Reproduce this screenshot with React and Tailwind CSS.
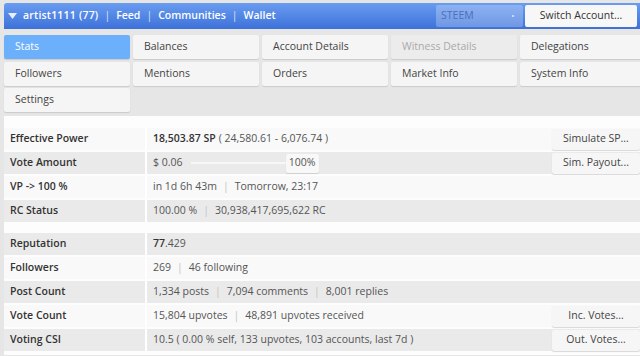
const tabs = [
  { label: 'Stats', active: true },
  { label: 'Balances' },
  { label: 'Account Details' },
  { label: 'Witness Details', disabled: true },
  { label: 'Delegations' },
  { label: 'Followers' },
  { label: 'Mentions' },
  { label: 'Orders' },
  { label: 'Market Info' },
  { label: 'System Info' },
  { label: 'Settings' },
]

const Sep = ({ head }) => <span className={head ? 'mx-[6px] text-[#d8e3f8]' : 'mx-[6px] text-[#c4c4c4]'}>|</span>

const SideButton = ({ children }) => (
  <button className="ml-auto h-[21px] w-[88px] shrink-0 rounded-[2px] bg-[#f6f6f6] text-[#444] shadow-[0_1px_1px_rgba(0,0,0,0.15)]">
    {children}
  </button>
)

const Row = ({ label, gray, children, action }) => (
  <div className={`flex h-[22px] items-center ${gray ? 'bg-[#eaeaea]' : 'bg-[#f9f9f9]'}`}>
    <div className="flex h-full w-[143px] shrink-0 items-center border-r-2 border-white pl-[6px] font-semibold text-[#333]">
      {label}
    </div>
    <div className="flex h-full flex-1 items-center whitespace-nowrap pl-[6px] text-[#555]">
      {children}
      {action && <SideButton>{action}</SideButton>}
    </div>
  </div>
)

const App = () => {
  return (
    <div className="h-[356px] w-[640px] overflow-hidden bg-[#e6e6e6] pt-[3px] pl-[4px] text-[10.5px]" style={{ fontFamily: '"Open Sans", sans-serif' }}>
      <div className="flex h-[26px] items-center whitespace-nowrap rounded-tl-[3px] bg-gradient-to-b from-[#6a9cf0] to-[#3d71d9] pl-[4px] pr-[3px] text-[10.5px] text-white">
        <svg width="9" height="6" viewBox="0 0 9 6" className="mr-[6px] shrink-0">
          <path d="M0 0 L9 0 L4.5 6 Z" fill="#e8eefb" />
        </svg>
        <span className="font-semibold tracking-[0.2px]">artist1111 (77)</span>
        <Sep head />
        <span className="font-semibold">Feed</span>
        <Sep head />
        <span className="font-semibold">Communities</span>
        <Sep head />
        <span className="font-semibold">Wallet</span>
        <div className="ml-auto flex h-[22px] w-[87px] items-center justify-between rounded-[2px] bg-white/25 pl-[5px] pr-[9px] text-[#4a70b8]">
          <span>STEEM</span>
          <span className="h-[2px] w-[2px] rounded-full bg-[#e0e8f8]" />
        </div>
        <button className="ml-[2px] h-[22px] w-[112px] rounded-[2px] bg-[#f7f7f7] text-[#333]">Switch Account...</button>
      </div>

      <div className="grid w-[642px] grid-cols-5 gap-x-[3px] gap-y-[2.5px] pt-[6px] pb-[4px]">
        {tabs.map((t) => (
          <div
            key={t.label}
            className={`flex h-[24px] items-center rounded-[2px] pl-[11px] shadow-[0_1px_1px_rgba(0,0,0,0.12)] ${
              t.active ? 'bg-[#6cb0fb] text-white' : t.disabled ? 'bg-[#ececec] text-[#aaa]' : 'bg-[#f5f5f5] text-[#444]'
            }`}
          >
            {t.label}
          </div>
        ))}
      </div>

      <div className="flex flex-col gap-[2px] bg-[#fdfdfd] pt-[12px] pb-[4px]">
        <Row label="Effective Power" action="Simulate SP...">
          <span className="font-semibold text-[#333]">18,503.87 SP</span>
          <span className="ml-[3px]">( 24,580.61 - 6,076.74 )</span>
        </Row>
        <Row label="Vote Amount" gray action="Sim. Payout...">
          <span>$ 0.06</span>
          <div className="ml-[8px] h-[2px] w-[95px] bg-[#f7f7f7]" />
          <div className="flex h-[19px] w-[33px] items-center justify-center rounded-[2px] bg-[#f8f8f8] shadow-[0_1px_1px_rgba(0,0,0,0.12)]">100%</div>
        </Row>
        <Row label="VP -> 100 %">
          <span>in 1d 6h 43m</span>
          <Sep />
          <span>Tomorrow, 23:17</span>
        </Row>
        <Row label="RC Status" gray>
          <span>100.00 %</span>
          <Sep />
          <span>30,938,417,695,622 RC</span>
        </Row>
        <div className="h-[7px]" />
        <Row label="Reputation" gray>
          <span className="font-semibold text-[#333]">77</span>
          <span>.429</span>
        </Row>
        <Row label="Followers">
          <span>269</span>
          <Sep />
          <span>46 following</span>
        </Row>
        <Row label="Post Count" gray>
          <span>1,334 posts</span>
          <Sep />
          <span>7,094 comments</span>
          <Sep />
          <span>8,001 replies</span>
        </Row>
        <Row label="Vote Count" action="Inc. Votes...">
          <span>15,804 upvotes</span>
          <Sep />
          <span>48,891 upvotes received</span>
        </Row>
        <Row label="Voting CSI" gray action="Out. Votes...">
          <span>10.5 ( 0.00 % self, 133 upvotes, 103 accounts, last 7d )</span>
        </Row>
      </div>
    </div>
  )
}

export default App
